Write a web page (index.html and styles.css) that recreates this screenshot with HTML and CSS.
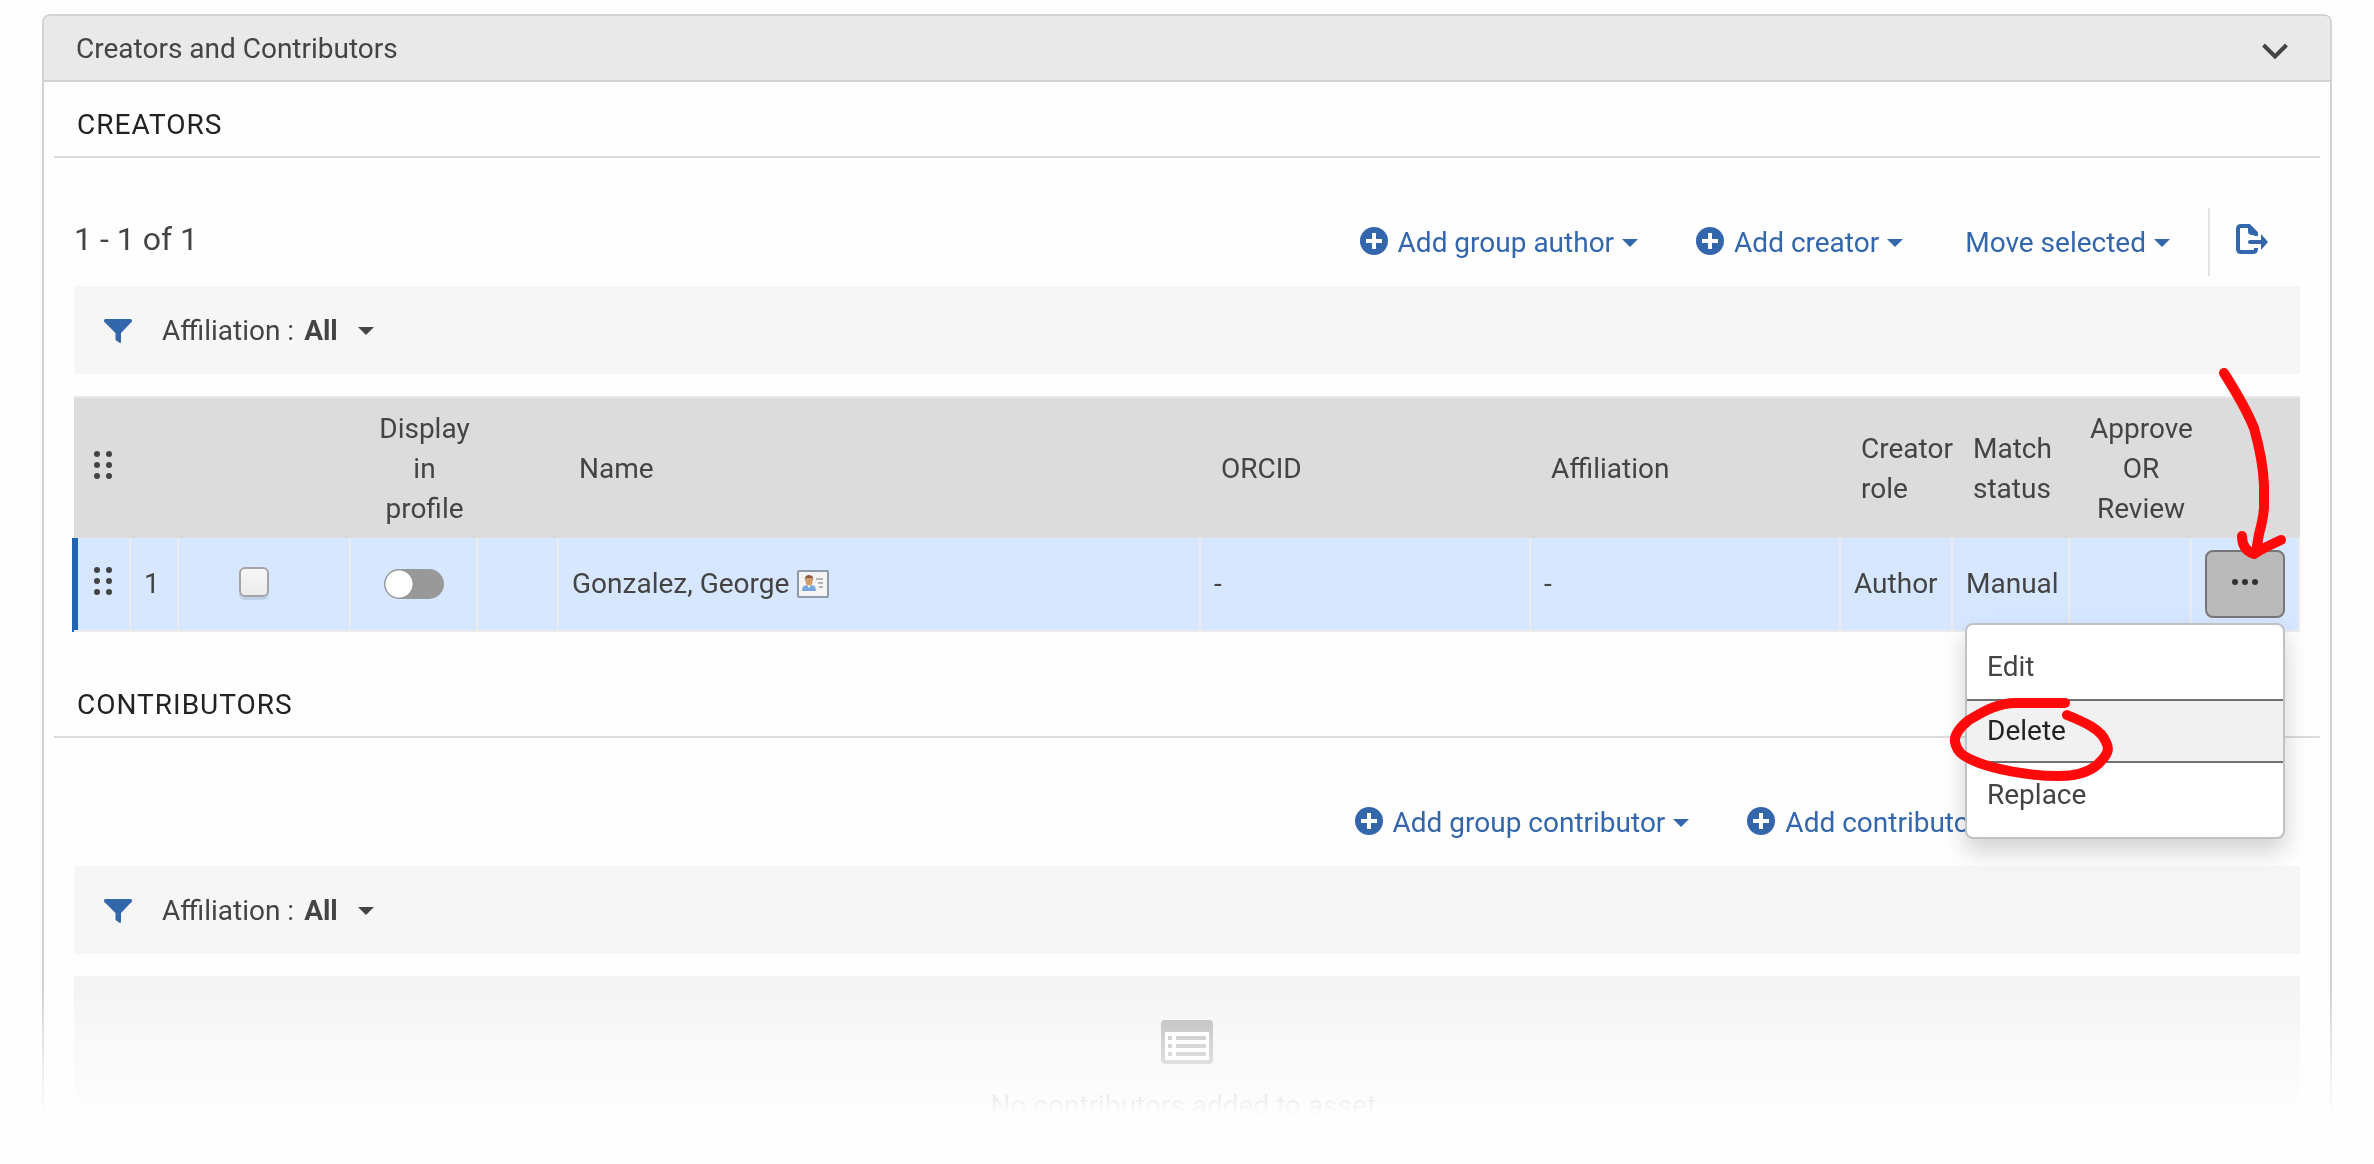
FILE: index.html
```html
<!DOCTYPE html>
<html lang="en">
<head>
<meta charset="utf-8">
<meta name="viewport" content="width=device-width, initial-scale=1">
<title>Creators and Contributors</title>
<link rel="stylesheet" href="styles.css">
</head>
<body>
<svg class="defs" aria-hidden="true">
  <symbol id="plus" viewBox="0 0 28 28"><circle cx="14" cy="14" r="14" fill="currentColor"/><path d="M14 6v16M6 14h16" stroke="#fff" stroke-width="4"/></symbol>
  <symbol id="caret" viewBox="0 0 16 8"><path d="M0 0h16L8 8z" fill="currentColor"/></symbol>
  <symbol id="funnel" viewBox="0 0 28 24"><path d="M1.500 0h25Q28 0 28 1.500v1L17 14v9q0 1-1.200 1L11.500 21V14L0 2.500v-1Q0 0 1.500 0z" fill="currentColor"/></symbol>
  <symbol id="grip" viewBox="0 0 18 28"><g fill="currentColor"><circle cx="3" cy="3" r="3"/><circle cx="15" cy="3" r="3"/><circle cx="3" cy="14" r="3"/><circle cx="15" cy="14" r="3"/><circle cx="3" cy="25" r="3"/><circle cx="15" cy="25" r="3"/></g></symbol>
</svg>
<main class="panel">
  <header class="panel-head">
    <h1 class="panel-title">Creators and Contributors</h1>
    <button class="icon-btn" aria-label="Collapse section"><svg width="26" height="16" viewBox="0 0 26 16"><path d="M1.500 2 13 13.500 24.500 2" fill="none" stroke="currentColor" stroke-width="4"/></svg></button>
  </header>

  <section class="group">
    <h2 class="group-title">CREATORS</h2>
    <div class="group-body">
      <div class="toolbar">
        <span class="count">1 - 1 of 1</span>
        <button class="link-btn"><svg class="plus"><use href="#plus"/></svg>Add group author<svg class="caret"><use href="#caret"/></svg></button>
        <button class="link-btn"><svg class="plus"><use href="#plus"/></svg>Add creator<svg class="caret"><use href="#caret"/></svg></button>
        <button class="link-btn move">Move selected<svg class="caret"><use href="#caret"/></svg></button>
        <div class="export">
          <button class="icon-btn" aria-label="Export"><svg width="32" height="30" viewBox="0 0 32 30"><path d="M20 24v1q0 3-3 3H5q-3 0-3-3V5q0-3 3-3h8l7 7v3" fill="none" stroke="currentColor" stroke-width="4"/><path d="M12 1v6q0 4 4 4h6v-2z" fill="currentColor"/><path d="M14 16h11v-6l7 8-7 8v-6H14q-2 0-2-2t2-2z" fill="currentColor"/></svg></button>
        </div>
      </div>
      <div class="filter">
        <svg class="funnel"><use href="#funnel"/></svg>
        <label for="aff-creators">Affiliation :</label>
        <select id="aff-creators"><option>All</option></select>
        <svg class="caret"><use href="#caret"/></svg>
      </div>
      <table class="people">
        <colgroup><col class="c-grip"><col class="c-num"><col class="c-check"><col class="c-display"><col class="c-gap"><col><col class="c-orcid"><col class="c-affiliation"><col class="c-role"><col class="c-match"><col class="c-approve"><col class="c-actions"></colgroup>
        <thead>
          <tr>
            <th class="grip-cell"><svg class="grip"><use href="#grip"/></svg></th><th></th><th></th>
            <th class="center">Display<br>in<br>profile</th><th></th>
            <th>Name</th><th>ORCID</th><th>Affiliation</th><th>Creator role</th><th>Match status</th>
            <th class="center">Approve<br>OR<br>Review</th><th></th>
          </tr>
        </thead>
        <tbody>
          <tr>
            <td class="grip-cell"><svg class="grip"><use href="#grip"/></svg></td>
            <td>1</td>
            <td class="check-cell"><input class="check" type="checkbox" aria-label="Select Gonzalez, George"></td>
            <td class="center"><input class="toggle" type="checkbox" role="switch" aria-label="Display in profile"></td>
            <td></td>
            <td><span class="person">Gonzalez, George
              <svg width="32" height="28" viewBox="0 0 32 28"><rect x="1" y="1" width="30" height="26" rx="1" fill="#f4f4f4" stroke="#8f9aa8" stroke-width="2"/><path d="M5 21q0-6 5-6h4q5 0 5 6z" fill="#78a5de"/><path d="M10 15l2 3 2-3z" fill="#fff"/><ellipse cx="12" cy="11" rx="3.500" ry="4.500" fill="#d49a68"/><path d="M8 11q-1-6 4-6t4 6l-1-3H9z" fill="#8b5a3c"/><path d="M19 9h7M21 13h5M22 17h4" stroke="#b4b4b4" stroke-width="2"/></svg></span></td>
            <td>-</td><td>-</td><td>Author</td><td>Manual</td><td></td>
            <td class="actions-cell">
              <div class="actions">
                <button class="more" aria-label="More actions" aria-expanded="true"><svg width="26" height="8" viewBox="0 0 26 8"><g fill="currentColor"><circle cx="3" cy="4" r="3"/><circle cx="13" cy="4" r="3"/><circle cx="23" cy="4" r="3"/></g></svg></button>
                <div class="menu" role="menu">
                  <button role="menuitem">Edit</button>
                  <button role="menuitem" class="active">Delete</button>
                  <button role="menuitem">Replace</button>
                </div>
                <svg class="marks" viewBox="0 0 360 440" aria-hidden="true"><g fill="none" stroke="#ff0a0a" stroke-width="10" stroke-linecap="round" stroke-linejoin="round"><path d="M285 13Q306 46 315 68Q324 100 325 125V148Q324 160 320 174L317 192"/><path d="M303 176Q303 190 315 194Q324 188 342 180"/><path d="M126 343H80C58 342 42 353 30 360C20 368 15 375 16 382C18 392 24 396 33 400C52 409 90 416 120 416C138 416 154 411 163 400C170 392 170 388 167 382C162 369 145 362 128 355"/></g></svg>
              </div>
            </td>
          </tr>
        </tbody>
      </table>
    </div>
  </section>

  <section class="group">
    <h2 class="group-title">CONTRIBUTORS</h2>
    <div class="group-body">
      <div class="toolbar toolbar-plain">
        <button class="link-btn"><svg class="plus"><use href="#plus"/></svg>Add group contributor<svg class="caret"><use href="#caret"/></svg></button>
        <button class="link-btn"><svg class="plus"><use href="#plus"/></svg>Add contributor<svg class="caret"><use href="#caret"/></svg></button>
        <button class="link-btn move">Move selected<svg class="caret"><use href="#caret"/></svg></button>
      </div>
      <div class="filter">
        <svg class="funnel"><use href="#funnel"/></svg>
        <label for="aff-contributors">Affiliation :</label>
        <select id="aff-contributors"><option>All</option></select>
        <svg class="caret"><use href="#caret"/></svg>
      </div>
      <div class="empty">
        <svg width="52" height="44" viewBox="0 0 52 44"><rect width="52" height="44" rx="4" fill="#b4b4b4"/><path d="M4 12h44v28H4z" fill="#fff"/><path d="M7 18h4M15 18h30M7 26h4M15 26h30M7 34h4M15 34h30" stroke="#b4b4b4" stroke-width="4"/></svg>
        <p>No contributors added to asset.</p>
      </div>
    </div>
  </section>
</main>
</body>
</html>
```
FILE: styles.css
```css
* { box-sizing: border-box; }

body {
  margin: 0;
  padding: 14px 42px 0;
  background: #fefefe;
  color: #444;
  font: 28px/40px Roboto, "Liberation Sans", sans-serif;
}

button, select {
  font: inherit;
  color: inherit;
  background: none;
  border: 0;
  padding: 0;
  cursor: pointer;
}

svg { display: block; flex: none; }
.defs { position: absolute; width: 0; height: 0; }

.panel {
  border: 2px solid #d2d2d2;
  border-bottom: 0;
  border-radius: 8px 8px 0 0;
  background: #fefefe;
  -webkit-mask-image: linear-gradient(#000 calc(100% - 128px), transparent);
  mask-image: linear-gradient(#000 calc(100% - 128px), transparent);
}

.panel-head {
  display: flex;
  align-items: center;
  justify-content: space-between;
  height: 66px;
  padding: 2px 42px 0 32px;
  background: #e9e9e9;
  border-bottom: 2px solid #d2d2d2;
  border-radius: 6px 6px 0 0;
}

.panel-head .icon-btn { padding-top: 4px; }
.panel-title, .group-title { margin: 0; font-size: 28px; font-weight: 400; }
.group { padding: 0 10px; }

.group-title {
  padding: 23px 23px 11px;
  border-bottom: 2px solid #dcdcdc;
  color: #222;
  letter-spacing: 1px;
}

.group-body { padding: 50px 20px 0; }

.toolbar {
  display: flex;
  align-items: center;
  justify-content: flex-end;
  gap: 58px;
  height: 68px;
  margin-bottom: 10px;
}

.toolbar-plain { padding-right: 30px; }

.count { margin-right: auto; padding-bottom: 6px; font-size: 32px; }

.link-btn {
  display: flex;
  align-items: center;
  padding-top: 2px;
  color: #3366ab;
  white-space: nowrap;
}

.move { padding-left: 4px; }
.plus { width: 28px; height: 28px; margin: 0 10px 4px 0; }
.caret { width: 16px; height: 8px; margin-left: 8px; }
.icon-btn { display: block; }

.export {
  display: flex;
  align-items: center;
  height: 68px;
  margin-left: -20px;
  padding: 0 32px 6px 26px;
  border-left: 2px solid #e4e4e4;
  color: #3366ab;
}

.filter {
  display: flex;
  align-items: center;
  height: 88px;
  padding: 2px 0 0 30px;
  background: #f6f6f6;
}

.funnel { width: 28px; height: 24px; margin-right: 30px; color: #3366ab; }

.filter select {
  appearance: none;
  width: 70px;
  margin-left: 10px;
  font-weight: 700;
}

.filter .caret { margin-left: -16px; pointer-events: none; }

.people {
  width: 100%;
  margin: 22px 0 30px;
  border-spacing: 0;
  table-layout: fixed;
}

.c-grip { width: 57px; }
.c-num { width: 48px; }
.c-check { width: 172px; }
.c-display { width: 127px; }
.c-gap { width: 81px; }
.c-orcid { width: 330px; }
.c-affiliation { width: 310px; }
.c-role { width: 112px; }
.c-match { width: 117px; }
.c-approve { width: 122px; }
.c-actions { width: 108px; }

th {
  height: 142px;
  padding: 2px 0 0 20px;
  border-top: 2px solid #e8e8e8;
  background: #dcdcdc;
  font-weight: 400;
  text-align: left;
}

td {
  height: 94px;
  padding: 0 0 0 13px;
  border-right: 2px solid #ececec;
  border-bottom: 2px solid #ececec;
  background: #d6e7ff;
}

th.grip-cell, td.grip-cell { padding: 0 0 6px 20px; }
td.grip-cell { box-shadow: -2px 0 #2264b0, inset 4px 0 #2264b0; }
.grip { width: 18px; height: 28px; }
.center { text-align: center; }
td.center { padding: 0; }
td.check-cell { padding: 0 20px 0 0; }

.check {
  appearance: none;
  display: block;
  width: 30px;
  height: 30px;
  margin: -4px auto 0;
  border: 2px solid #a4a4a8;
  border-radius: 6px;
  background: linear-gradient(#f6f6f6, #ececec);
  box-shadow: 0 3px 1px #c0cfe4;
}

.toggle {
  appearance: none;
  display: block;
  width: 60px;
  height: 30px;
  margin: 0 auto;
  border-radius: 15px;
  background: radial-gradient(circle at 15px 15px, #fff 13px, #999 14px);
}

.person { display: flex; align-items: center; gap: 8px; }

td.actions-cell { padding: 0; }
.actions { position: relative; width: 80px; margin-left: 13px; }

.more {
  display: flex;
  align-items: center;
  justify-content: center;
  width: 80px;
  height: 68px;
  padding-bottom: 4px;
  border: 2px solid #777;
  border-radius: 8px;
  background: #bababa;
  color: #333;
}

.menu {
  position: absolute;
  top: 73px;
  right: 0;
  z-index: 1;
  width: 320px;
  padding: 10px 0;
  border: 2px solid #bfc3c8;
  border-radius: 8px;
  background: #fff;
  box-shadow: 0 12px 24px rgb(0 0 0 / 18%);
}

.menu button {
  display: block;
  width: 100%;
  height: 64px;
  padding-left: 20px;
  border: 2px solid transparent;
  border-width: 2px 0;
  text-align: left;
}

.menu .active { border-color: #707070; background: #f1f1f1; color: #222; }

.marks {
  position: absolute;
  top: -190px;
  left: -266px;
  z-index: 2;
  width: 360px;
  height: 440px;
  pointer-events: none;
}

.empty {
  display: flex;
  flex-direction: column;
  align-items: center;
  gap: 22px;
  height: 140px;
  margin-top: 22px;
  padding-top: 44px;
  background: #f4f4f4;
  color: #888;
}

.empty p { margin: 0; }
```
